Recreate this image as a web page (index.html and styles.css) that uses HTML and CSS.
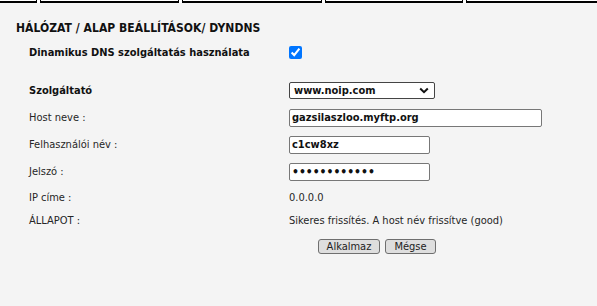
FILE: index.html
```html
<!DOCTYPE html>
<html>
  <head>
    <meta charset="UTF-8" />
    <title>DynDNS</title>
    <link rel="stylesheet" href="styles.css">
  </head>
  <body>
    <div class="tabs">
      <div class="tab tab-first"></div>
      <div class="tab tab-2"></div>
      <div class="tab tab-3"></div>
      <div class="tab tab-4"></div>
      <div class="tab tab-last"></div>
    </div>
    <div class="content">
      <h1 class="title">HÁLÓZAT / ALAP BEÁLLÍTÁSOK/ DYNDNS</h1>

      <div class="row row-first">
        <span class="label bold">Dinamikus DNS szolgáltatás használata</span>
        <span class="value"><input type="checkbox" class="check" checked /></span>
      </div>

      <div class="row row-spaced">
        <span class="label bold">Szolgáltató</span>
        <span class="value">
          <span class="select">
            <span>www.noip.com</span>
            <svg width="10" height="7" viewBox="0 0 10 7"><path d="M1.2 1.5 L5 5.2 L8.8 1.5" fill="none" stroke="#111" stroke-width="2"/></svg>
          </span>
        </span>
      </div>

      <div class="row">
        <span class="label">Host neve :</span>
        <span class="value"><input class="field field-wide" value="gazsilaszloo.myftp.org" /></span>
      </div>

      <div class="row">
        <span class="label">Felhasználói név :</span>
        <span class="value"><input class="field" value="c1cw8xz" /></span>
      </div>

      <div class="row">
        <span class="label">Jelszó :</span>
        <span class="value"><input class="field field-pass" type="password" value="aaaaaaaaaaaa" /></span>
      </div>

      <div class="row row-ip">
        <span class="label">IP címe :</span>
        <span class="value">0.0.0.0</span>
      </div>

      <div class="row row-state">
        <span class="label">ÁLLAPOT :</span>
        <span class="value">Sikeres frissítés. A host név frissítve (good)</span>
      </div>

      <div class="buttons">
        <button type="button" class="btn btn-apply">Alkalmaz</button>
        <button type="button" class="btn btn-cancel">Mégse</button>
      </div>
    </div>
  </body>
</html>
```

FILE: styles.css
```css
html {
  height: 100%;
}
body {
  margin: 0;
  height: 100%;
  background-color: #f4f4f4;
  font-family: "DejaVu Sans Condensed", "DejaVu Sans", sans-serif;
  font-size: 11px;
  color: #262626;
}
.tabs {
  display: flex;
  height: 3px;
  background: white;
  overflow: hidden;
}
.tab {
  height: 1px;
  border: 1px solid black;
  border-top: none;
  border-bottom-width: 2px;
  background: white;
  margin-right: 3px;
}
.tab-first {
  width: 37px;
  margin-left: -2px;
}
.tab-2 {
  width: 137px;
}
.tab-3 {
  width: 138px;
}
.tab-4 {
  width: 136px;
}
.tab-last {
  flex: 1;
  margin-right: -2px;
}
.content {
  padding: 0 16px;
}
.title {
  margin: 0;
  padding-top: 18px;
  height: 19px;
  font-size: 12px;
  font-weight: bold;
  color: #111;
  letter-spacing: 0.05px;
}
.row {
  display: flex;
  align-items: center;
  height: 27px;
}
.row-first {
  height: 24px;
}
.row-spaced {
  margin-top: 13px;
}
.row-ip {
  height: 25px;
}
.row-state {
  height: 20px;
}
.label {
  width: 260px;
  padding-left: 13px;
}
.bold {
  font-weight: bold;
  color: #111;
}
.value {
  display: flex;
  align-items: center;
}
.check {
  width: 13px;
  height: 13px;
  margin: 0;
}
.select {
  display: flex;
  align-items: center;
  justify-content: space-between;
  box-sizing: border-box;
  width: 146px;
  height: 17px;
  padding: 0 5px 0 4px;
  border: 1px solid #444;
  border-radius: 2px;
  background: white;
  font-weight: bold;
  color: #111;
}
.field {
  box-sizing: border-box;
  width: 141px;
  height: 18px;
  padding: 0 2px;
  border: 1px solid #777;
  border-radius: 2px;
  background: white;
  font-family: inherit;
  font-size: 11px;
  font-weight: bold;
  color: #111;
  outline: none;
}
.field-wide {
  width: 253px;
}
.field-pass {
  font-size: 12px;
}
.buttons {
  display: flex;
  gap: 5px;
  padding-left: 302px;
  margin-top: 9px;
}
.btn {
  box-sizing: border-box;
  height: 15px;
  padding: 0;
  border: 1px solid #6f6f6f;
  border-radius: 3px;
  background: #dedede;
  font-family: inherit;
  font-size: 11px;
  color: #222;
  line-height: 12px;
}
.btn-apply {
  width: 62px;
}
.btn-cancel {
  width: 51px;
}
```
